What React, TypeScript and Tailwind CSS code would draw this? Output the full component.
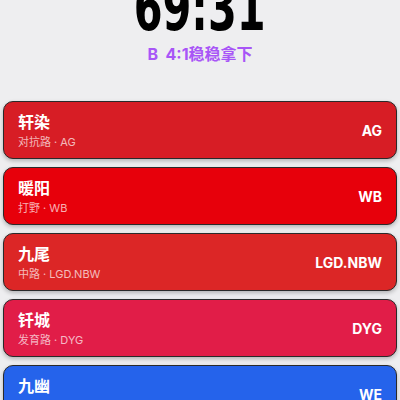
import React from "react";

const players = [
  { name: "轩染", role: "对抗路", team: "AG", bg: "bg-[#d71d25]" },
  { name: "暖阳", role: "打野", team: "WB", bg: "bg-[#e7000b]" },
  { name: "九尾", role: "中路", team: "LGD.NBW", bg: "bg-[#dc2626]" },
  { name: "钎城", role: "发育路", team: "DYG", bg: "bg-[#e11d48]" },
  { name: "九幽", role: "游走", team: "WE", bg: "bg-[#2563eb]" },
];

export default function App() {
  return (
    <div
      className="h-screen overflow-hidden bg-[#eeeef0]"
      style={{ fontFamily: '"Inter", "Noto Sans CJK SC", sans-serif' }}
    >
      <div className="-mt-[24px] flex flex-col items-center">
        <div
          className="text-[64px] leading-none font-bold text-black scale-x-[0.72]"
          style={{ fontFamily: '"DejaVu Sans Condensed", "DejaVu Sans", sans-serif' }}
        >
          69:31
        </div>
        <div className="mt-[4px] text-[16px] font-bold text-[#a855f7] leading-5">B&nbsp;&nbsp;4:1稳稳拿下</div>
      </div>
      <div className="mt-[37px] flex flex-col gap-[8px] px-[3px]">
        {players.map((p) => (
          <div
            key={p.name}
            className={`${p.bg} h-[58px] shrink-0 rounded-[10px] border border-[#2a2a2a] shadow-[0_2px_4px_rgba(0,0,0,0.25)] px-[14px] flex items-center justify-between text-white`}
          >
            <div className="flex flex-col">
              <div className="text-[16px] font-bold leading-[20px]">{p.name}</div>
              <div className="mt-[3px] text-[11px] leading-[14px] text-white/70">
                {p.role} · {p.team}
              </div>
            </div>
            <div className="text-[14px] font-bold">{p.team}</div>
          </div>
        ))}
      </div>
    </div>
  );
}
